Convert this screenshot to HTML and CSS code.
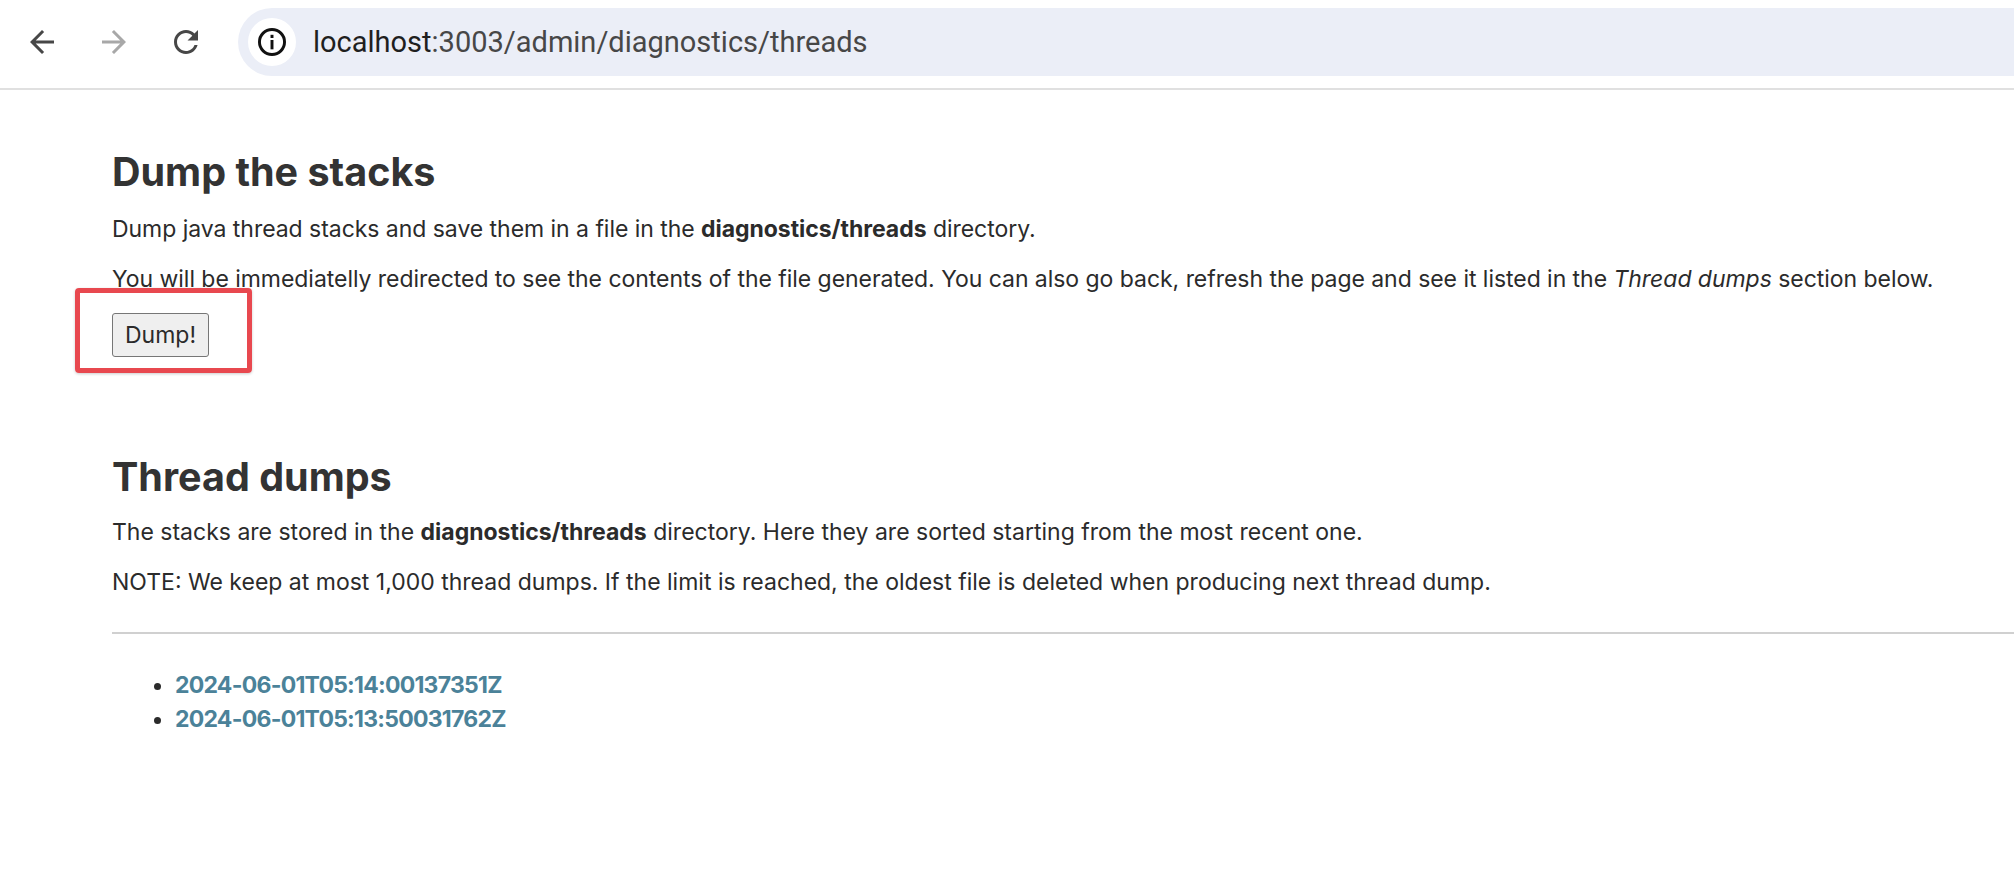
FILE: index.html
```html
<!DOCTYPE html>
<html lang="en">
<head>
    <meta charset="UTF-8">
    <title>Diagnostics - Threads</title>
    <link rel="stylesheet" href="styles.css">
</head>
<body>
    <!-- browser toolbar -->
    <div class="toolbar">
        <svg class="nav-icon" viewBox="0 0 24 24"><path fill="#474747" d="M20 11H7.83l5.59-5.59L12 4l-8 8 8 8 1.41-1.41L7.83 13H20v-2z"/></svg>
        <svg class="nav-icon" viewBox="0 0 24 24"><path fill="#a8a8a8" d="M4 11h12.17l-5.59-5.59L12 4l8 8-8 8-1.41-1.41L16.17 13H4v-2z"/></svg>
        <svg class="nav-icon" viewBox="0 0 24 24"><path fill="#474747" d="M17.65 6.35C16.2 4.9 14.21 4 12 4c-4.42 0-7.99 3.58-7.99 8s3.57 8 7.99 8c3.73 0 6.84-2.55 7.73-6h-2.08c-.82 2.33-3.04 4-5.65 4-3.31 0-6-2.69-6-6s2.69-6 6-6c1.66 0 3.14.69 4.22 1.78L13 11h7V4l-2.35 2.35z"/></svg>
        <div class="address-bar">
            <div class="site-info">
                <svg viewBox="0 0 24 24" width="32" height="32"><circle cx="12" cy="12" r="9.4" fill="none" stroke="#111" stroke-width="2.2"/><rect x="10.9" y="10.5" width="2.2" height="7" fill="#111"/><rect x="10.9" y="6.6" width="2.2" height="2.4" fill="#111"/></svg>
            </div>
            <span class="url"><span class="url-host">localhost</span>:3003/admin/diagnostics/threads</span>
        </div>
    </div>

    <div class="content">
        <div class="dump-section">
            <h2>Dump the stacks</h2>
            <p>Dump java thread stacks and save them in a file in the <b>diagnostics/threads</b> directory.</p>
            <p>You will be immediatelly redirected to see the contents of the file generated. You can also go back, refresh the page and see it listed in the <i>Thread dumps</i> section below.</p>
            <button class="dump-btn">Dump!</button>
        </div>

        <div class="threads-section">
            <h2>Thread dumps</h2>
            <p>The stacks are stored in the <b>diagnostics/threads</b> directory. Here they are sorted starting from the most recent one.</p>
            <p>NOTE: We keep at most 1,000 thread dumps. If the limit is reached, the oldest file is deleted when producing next thread dump.</p>
            <hr>
            <ul>
                <li><a href="#">2024-06-01T05:14:00137351Z</a></li>
                <li><a href="#">2024-06-01T05:13:50031762Z</a></li>
            </ul>
        </div>
    </div>

    <!-- annotation drawn on top of the screenshot -->
    <div class="highlight"></div>
</body>
</html>
```

FILE: styles.css
```css
body {
    margin: 0;
    background: #fff;
    color: #2b2b2b;
    font-family: 'Inter', sans-serif;
    font-size: 23px;
    overflow: hidden;
}

.toolbar {
    display: flex;
    align-items: center;
    height: 84px;
    padding: 0 0 4px 24px;
    gap: 36px;
    border-bottom: 2px solid #e0e0e0;
}
.nav-icon {
    width: 36px;
    height: 36px;
    flex: none;
}
.address-bar {
    display: flex;
    align-items: center;
    flex: 1;
    height: 68px;
    margin-left: -2px;
    padding-left: 10px;
    background: #ebeef7;
    border-radius: 34px 0 0 34px;
}
.site-info {
    display: flex;
    justify-content: center;
    align-items: center;
    width: 48px;
    height: 48px;
    border-radius: 50%;
    background: #fff;
}
.url {
    margin-left: 17px;
    font-family: 'Roboto', sans-serif;
    font-size: 29px;
    color: #474747;
}
.url-host {
    color: #1f1f1f;
}

.content {
    padding: 54px 0 0 112px;
}
h2 {
    margin: 0 0 15px;
    font-size: 39.5px;
    line-height: 56px;
    font-weight: 700;
    color: #333;
}
p {
    margin: 0 0 22px;
    line-height: 28px;
}
.dump-section p {
    letter-spacing: -0.04px;
}
.threads-section {
    margin-top: 92px;
}
.threads-section h2 {
    margin-bottom: 13px;
}
.dump-btn {
    display: block;
    width: 97px;
    height: 44px;
    margin-top: -2px;
    padding: 0;
    font-family: inherit;
    font-size: 23px;
    color: #2b2b2b;
    background: #efefef;
    border: 1px solid #767676;
    border-radius: 3px;
}
hr {
    margin: 36px 0 0;
    border: none;
    border-top: 2px solid #d0d0d0;
}
ul {
    margin: 34px 0 0;
    padding-left: 63px;
}
li {
    line-height: 34px;
}
a {
    color: #4b8299;
    font-weight: 700;
    letter-spacing: -0.75px;
    text-decoration: none;
}

.highlight {
    position: absolute;
    left: 75px;
    top: 288px;
    width: 177px;
    height: 85px;
    box-sizing: border-box;
    border: 5px solid #e8484f;
    border-radius: 4px;
    box-shadow: 0 1px 3px rgba(0, 0, 0, 0.2);
}
```
